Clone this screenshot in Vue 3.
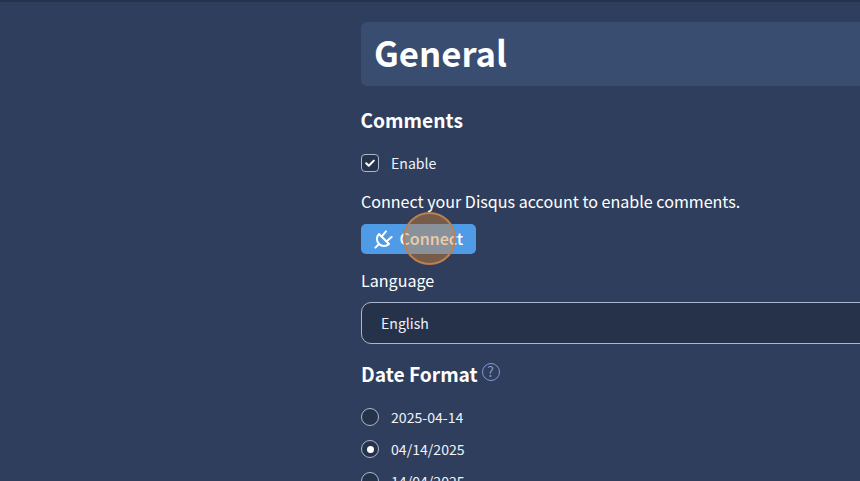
<script setup>
const dates = [
  { label: '2025-04-14', checked: false },
  { label: '04/14/2025', checked: true },
  { label: '14/04/2025', checked: false },
]
</script>

<template>
  <div class="page">
    <main class="main">
      <h1 class="title">General</h1>
      <h2 class="heading comments">Comments</h2>
      <label class="option enable">
        <span class="box">
          <svg width="12" height="12" viewBox="0 0 12 12" fill="none"><path d="M2.2 6.3 4.8 8.8 9.8 3.6" stroke="#fff" stroke-width="2" stroke-linecap="round" stroke-linejoin="round"/></svg>
        </span>
        <span>Enable</span>
      </label>
      <p class="text">Connect your Disqus account to enable comments.</p>
      <div class="btn-wrap">
        <button class="btn">
          <svg width="20" height="20" viewBox="0 0 20 20" fill="none" stroke="#fff" stroke-width="2" stroke-linecap="round" stroke-linejoin="round">
            <path d="M5 5 15 15A7.07 7.07 0 0 1 5 5Z" />
            <path d="M5 15 1.4 18.6M7.6 7.6 12 2.4M12.4 12.4 17.6 8" />
          </svg>
          <span class="btn-label">Connect</span>
        </button>
        <span class="cursor"></span>
      </div>
      <div class="text lang-label">Language</div>
      <div class="select">English</div>
      <h2 class="heading date">
        Date Format
        <span class="help">?</span>
      </h2>
      <div class="radios">
        <label v-for="d in dates" :key="d.label" class="option radio-row">
          <span class="radio" :class="{ on: d.checked }"></span>
          <span>{{ d.label }}</span>
        </label>
      </div>
    </main>
  </div>
</template>

<style>
html, body { margin: 0; background: #2f3e5c; overflow: hidden; }
</style>

<style scoped>
.page {
  width: 860px;
  height: 481px;
  overflow: hidden;
  box-sizing: border-box;
  border-top: 2px solid #25344a;
  background: #2f3e5c;
  color: #fff;
  font-family: "Noto Sans CJK JP", "Noto Sans", sans-serif;
}
.main {
  margin-left: 361px;
  width: 560px;
  padding-top: 20px;
}
.title {
  margin: 0;
  height: 64px;
  line-height: 61px;
  padding-left: 13px;
  border-radius: 6px;
  background: #394d70;
  font-size: 34.7px;
  font-weight: 700;
}
.heading {
  margin: 0;
  font-size: 19.2px;
  font-weight: 700;
  line-height: 28px;
}
.comments { margin-top: 20px; margin-left: -0.5px; }
.option {
  display: flex;
  align-items: center;
  gap: 12px;
  font-size: 14.1px;
  line-height: 18px;
  color: #eef3fb;
}
.enable { margin-top: 20px; }
.box {
  box-sizing: border-box;
  width: 18px;
  height: 18px;
  border: 1px solid #a9b7d0;
  border-radius: 4px;
  background: #25324a;
  display: flex;
  align-items: center;
  justify-content: center;
}
.text {
  margin: 0;
  font-size: 16.08px;
  line-height: 24px;
  color: #fff;
}
p.text { margin-top: 17px; }
.btn-wrap { position: relative; width: 115px; margin-top: 11px; }
.btn {
  width: 115px;
  height: 30px;
  border: 0;
  padding: 0 0 0 13px;
  border-radius: 5px;
  background: #4f9be6;
  color: #fff;
  font: inherit;
  font-size: 16px;
  font-weight: 500;
  display: flex;
  align-items: center;
  gap: 5.5px;
}
.btn-label { margin-top: -2px; }
.cursor {
  position: absolute;
  left: 42px;
  top: -12px;
  width: 53px;
  height: 53px;
  box-sizing: border-box;
  border-radius: 50%;
  border: 2px solid #bd8050;
  background: rgba(220, 134, 50, 0.42);
}
.lang-label { margin-top: 14px; }
.select {
  box-sizing: border-box;
  height: 42px;
  margin-top: 10px;
  padding-left: 19px;
  line-height: 41px;
  font-size: 14.1px;
  border: 1px solid #a9b7d0;
  border-radius: 10px;
  background: #25324a;
  color: #eef3fb;
}
.date {
  margin-top: 16px;
  display: flex;
  align-items: center;
  gap: 4px;
}
.help {
  box-sizing: border-box;
  width: 18px;
  height: 18px;
  border: 1.3px solid #8199cf;
  border-radius: 50%;
  color: #8199cf;
  font-size: 14px;
  font-weight: 400;
  line-height: 15px;
  text-align: center;
  margin-top: -5px;
}
.radios { margin-top: 13px; }
.radio-row { height: 32px; }
.radio {
  box-sizing: border-box;
  width: 18px;
  height: 18px;
  border: 1px solid #a9b7d0;
  border-radius: 50%;
  background: #25324a;
  display: flex;
  align-items: center;
  justify-content: center;
}
.radio.on::after {
  content: "";
  width: 7px;
  height: 7px;
  border-radius: 50%;
  background: #fff;
}
</style>
